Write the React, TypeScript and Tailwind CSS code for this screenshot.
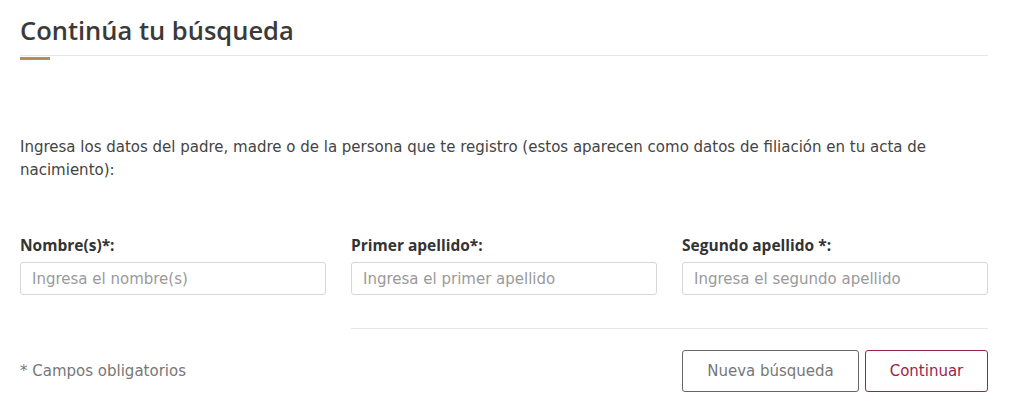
const body = { fontFamily: '"DejaVu Sans", "Liberation Sans", sans-serif' };
const heading = { fontFamily: '"Open Sans", "Liberation Sans", sans-serif' };

const fields = [
  { label: "Nombre(s)*:", placeholder: "Ingresa el nombre(s)" },
  { label: "Primer apellido*:", placeholder: "Ingresa el primer apellido" },
  { label: "Segundo apellido *:", placeholder: "Ingresa el segundo apellido" },
];

export default function App() {
  return (
    <div className="min-h-[413px] bg-white" style={body}>
      <div className="ml-5 w-[968px]">
        {/* Title */}
        <h2
          className="pt-[14px] pb-[9px] text-[25.5px] leading-[32px] font-semibold text-[#3a3a3a] border-b border-[#e6e6e6]"
          style={heading}
        >
          Continúa tu búsqueda
        </h2>
        <div className="mt-[1px] h-[3px] w-[30px] bg-[#b38e5d]" />

        {/* Intro */}
        <p className="mt-[76px] text-[15px] leading-[23px] text-[#444444]">
          Ingresa los datos del padre, madre o de la persona que te registro (estos aparecen como datos de
          filiación en tu acta de nacimiento):
        </p>

        {/* Fields */}
        <div className="mt-[53px] grid grid-cols-3 gap-x-[25px]">
          {fields.map((f) => (
            <div key={f.label}>
              <label className="block text-[15.5px] leading-[20px] font-bold text-[#333333]" style={heading}>
                {f.label}
              </label>
              <input
                placeholder={f.placeholder}
                className="mt-[7px] h-[33px] w-full rounded-[3px] border border-[#d6d6d6] px-[11px] text-[15px] text-[#333333] placeholder:text-[#9a9a9a] outline-none"
                style={body}
              />
            </div>
          ))}
        </div>

        {/* Footer */}
        <div className="mt-[33px] grid grid-cols-3 gap-x-[25px]">
          <div />
          <div className="col-span-2 border-t border-[#e6e6e6]" />
        </div>
        <div className="mt-[21px] flex items-center justify-between">
          <span className="text-[15px] text-[#777777]">* Campos obligatorios</span>
          <div className="flex gap-[6px]">
            <button className="h-[42px] w-[177px] rounded-[3px] border border-[#666666] text-[15px] text-[#777777]">
              Nueva búsqueda
            </button>
            <button className="h-[42px] w-[123px] rounded-[3px] border border-[#9d2449] text-[15px] text-[#9d2449]">
              Continuar
            </button>
          </div>
        </div>
      </div>
    </div>
  );
}
